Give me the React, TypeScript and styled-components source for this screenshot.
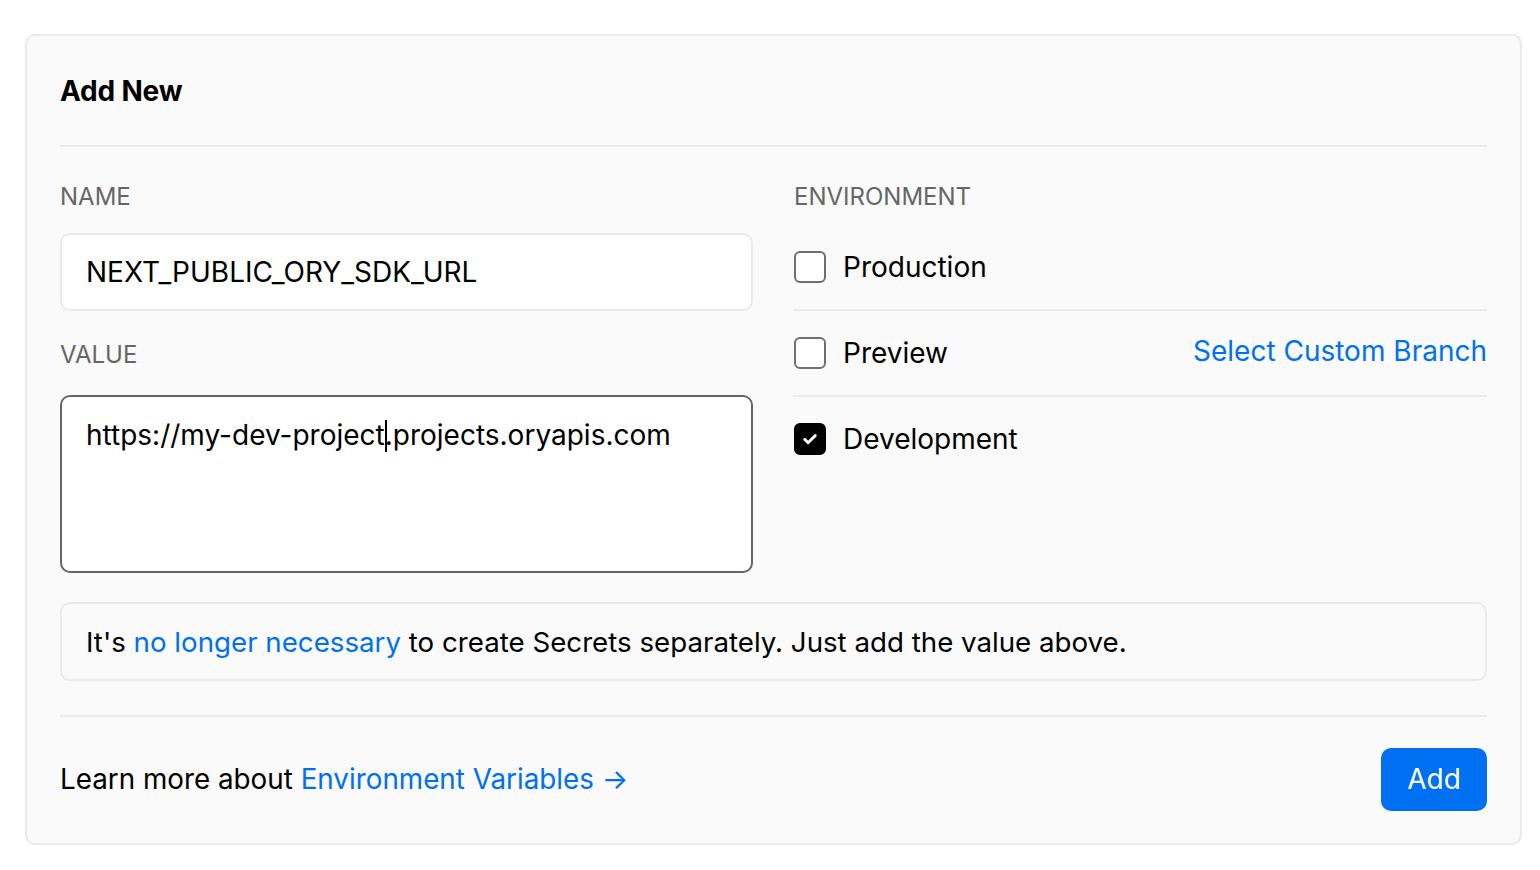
import React from 'react';
import styled, { createGlobalStyle } from 'styled-components';

const GlobalStyle = createGlobalStyle`
  body {
    margin: 0;
    background: #fff;
    font-family: Inter, "Noto Sans", "Liberation Sans", sans-serif;
    color: #000;
  }
`;

const Page = styled.div`
  padding: 34px 18px 0 25px;
`;

const Card = styled.div`
  background: #fafafa;
  border: 2px solid #eaeaea;
  border-radius: 10px;
  padding: 0 33px;
  height: 811px;
  box-sizing: border-box;
`;

const Header = styled.div`
  height: 109px;
  display: flex;
  align-items: center;
  border-bottom: 2px solid #eaeaea;
`;

const Title = styled.h2`
  margin: 0;
  font-size: 28px;
  font-weight: 700;
  letter-spacing: -0.2px;
`;

const FormGrid = styled.div`
  display: grid;
  grid-template-columns: 1fr 1fr;
  column-gap: 41px;
  padding-top: 36px;
`;

const Column = styled.div`
  display: flex;
  flex-direction: column;
`;

const Label = styled.div<{ $space: number; $top?: number }>`
  font-size: 24px;
  line-height: 28px;
  color: #666;
  text-transform: uppercase;
  margin-top: ${p => p.$top ?? 0}px;
  margin-bottom: ${p => p.$space}px;
`;

const Input = styled.div`
  height: 78px;
  box-sizing: border-box;
  background: #fff;
  border: 2px solid #eaeaea;
  border-radius: 10px;
  padding: 0 24px;
  display: flex;
  align-items: center;
  font-size: 28px;
`;

const TextArea = styled.div`
  height: 178px;
  box-sizing: border-box;
  background: #fff;
  border: 2px solid #666;
  border-radius: 10px;
  padding: 19px 24px;
  font-size: 28px;
  line-height: 38px;
`;

const Caret = styled.span`
  display: inline-block;
  width: 0;
  height: 32px;
  border-left: 2px solid #000;
  vertical-align: -7px;
  margin-right: -2px;
`;

const EnvRow = styled.div<{ $last?: boolean }>`
  height: 84px;
  display: flex;
  align-items: center;
  border-bottom: ${p => (p.$last ? 'none' : '2px solid #eaeaea')};
`;

const CheckBox = styled.span<{ $checked?: boolean }>`
  width: 32px;
  height: 32px;
  box-sizing: border-box;
  border-radius: 6px;
  border: 2px solid ${p => (p.$checked ? '#000' : '#6f6f6f')};
  background: ${p => (p.$checked ? '#000' : '#fff')};
  display: flex;
  align-items: center;
  justify-content: center;
  flex-shrink: 0;
`;

const CheckText = styled.span`
  margin-left: 17px;
  font-size: 28px;
  flex: 1;
`;

const Link = styled.a`
  color: #0070f3;
  text-decoration: none;
  cursor: pointer;
`;

const BranchLink = styled(Link)`
  font-size: 28px;
  margin-top: -4px;
`;

const Note = styled.div`
  margin-top: 29px;
  height: 79px;
  box-sizing: border-box;
  border: 2px solid #eaeaea;
  border-radius: 10px;
  padding: 0 24px;
  display: flex;
  align-items: center;
  font-size: 27.7px;
`;

const Footer = styled.div`
  margin-top: 34px;
  border-top: 2px solid #eaeaea;
  height: 124px;
  display: flex;
  align-items: center;
  justify-content: space-between;
  font-size: 27.8px;
`;

const AddButton = styled.button`
  width: 106px;
  height: 63px;
  border: none;
  border-radius: 10px;
  background: #0070f3;
  color: #fff;
  font-family: inherit;
  font-size: 28px;
  cursor: pointer;
`;

const Check = () => (
  <svg width="18" height="18" viewBox="0 0 24 24" fill="none" stroke="#fff" strokeWidth="3.8" strokeLinecap="round" strokeLinejoin="round">
    <path d="M5 12.5l4.5 4.5L19 7.5" />
  </svg>
);

const envs = [
  { name: 'Production', checked: false },
  { name: 'Preview', checked: false, branch: true },
  { name: 'Development', checked: true },
];

const App = () => {
  return (
    <Page>
      <GlobalStyle />
      <Card>
        <Header>
          <Title>Add New</Title>
        </Header>
        <FormGrid>
          <Column>
            <Label $space={22}>Name</Label>
            <Input>NEXT_PUBLIC_ORY_SDK_URL</Input>
            <Label $top={30} $space={26}>Value</Label>
            <TextArea>
              https://my-dev-project<Caret />.projects.oryapis.com
            </TextArea>
          </Column>
          <Column>
            <Label $space={14}>Environment</Label>
            {envs.map((env, i) => (
              <EnvRow key={env.name} $last={i === envs.length - 1}>
                <CheckBox $checked={env.checked}>{env.checked && <Check />}</CheckBox>
                <CheckText>{env.name}</CheckText>
                {env.branch && <BranchLink>Select Custom Branch</BranchLink>}
              </EnvRow>
            ))}
          </Column>
        </FormGrid>
        <Note>
          <span>
            It's <Link>no longer necessary</Link> to create Secrets separately. Just add the value above.
          </span>
        </Note>
        <Footer>
          <span>
            Learn more about <Link>Environment Variables →</Link>
          </span>
          <AddButton>Add</AddButton>
        </Footer>
      </Card>
    </Page>
  );
};

export default App;
